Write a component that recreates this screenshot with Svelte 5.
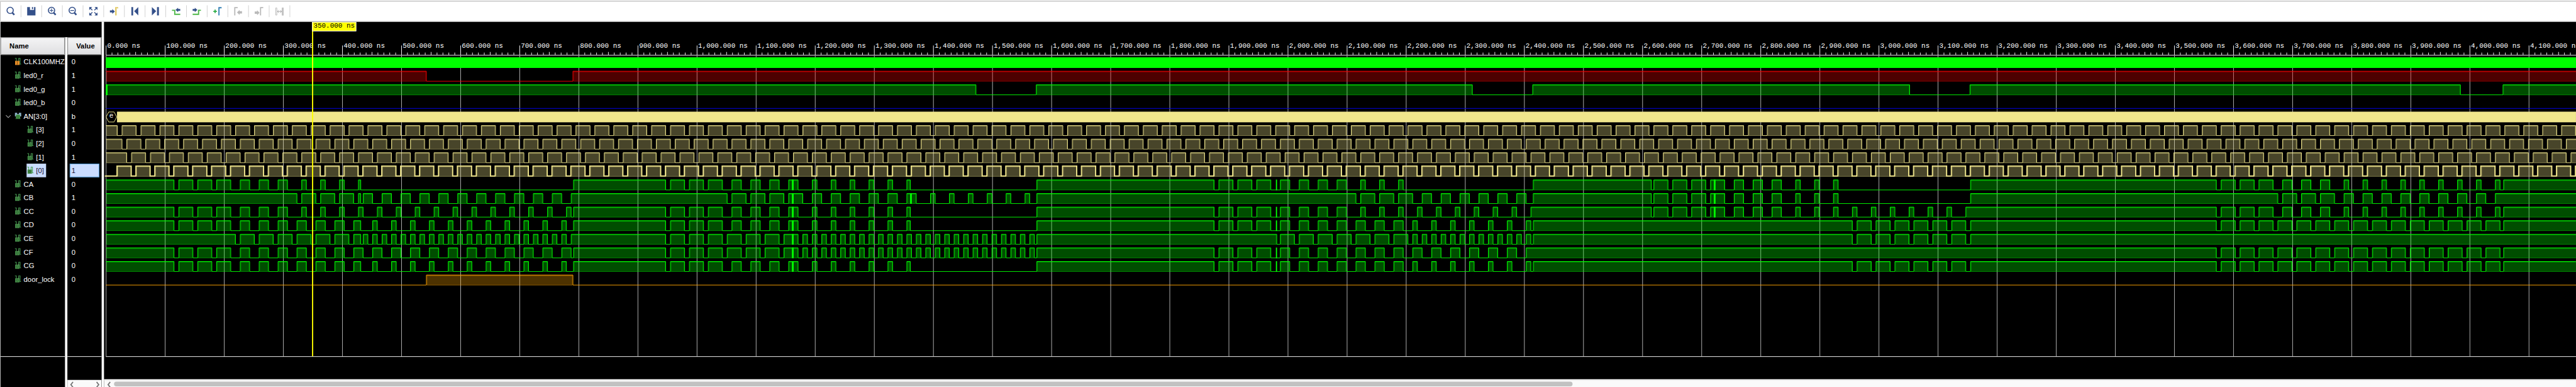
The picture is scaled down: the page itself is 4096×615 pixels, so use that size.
<script>
  const X0 = 179;
  const END = 4185;

  const rep = (start, width, period, count) =>
    Array.from({ length: count }, (_, i) => [start + i * period, start + i * period + width]);
  const anode = (firstFall) => [[0, firstFall], ...rep(firstFall + 8, 24, 32, 132)];

  const t1 = rep(123, 24, 32, 3);
  const t1b = rep(227, 16, 32, 3);
  const a2 = [...rep(955, 24, 32, 3), ...rep(1059, 16, 32, 3), [1155, 1171], ...rep(1195, 8, 32, 5), [1355, 1361]];
  const e2 = [...rep(955, 24, 32, 7), ...rep(1179, 8, 16, 25)];
  const r3 = rep(1883, 24, 32, 3);
  const a4 = [[2619, 2643], [2651, 2675], [2683, 2707], [2715, 2739], ...rep(2755, 16, 32, 3)];
  const d4 = rep(2963, 24, 32, 6);
  const a5 = [...rep(3579, 24, 32, 3), ...rep(3683, 16, 32, 3), ...rep(3787, 8, 32, 9), [4057, END]];
  const d5 = [...rep(3579, 24, 32, 15), [4057, END]];

  const GREEN = '#00ff00';
  const KHAKI = '#f0e68c';

  const signals = [
    { name: 'CLK100MHZ', value: '0', icon: 'clk', color: GREEN, solid: 0 },
    { name: 'led0_r', value: '1', color: '#ff0000', high: [[0, 542], [790, END]] },
    { name: 'led0_g', value: '1', color: GREEN, high: [[0, 1472], [1574, 2312], [2414, 3052], [3154, 3984], [4056, END]], spikes: [[0, 3]] },
    { name: 'led0_b', value: '0', color: '#0000f0', high: [] },
    { name: 'AN[3:0]', value: 'b', icon: 'bus', color: KHAKI, solid: 19 },
    { name: '[3]', value: '1', child: true, color: KHAKI, high: anode(19) },
    { name: '[2]', value: '0', child: true, color: KHAKI, high: anode(27) },
    { name: '[1]', value: '1', child: true, color: KHAKI, high: anode(35) },
    { name: '[0]', value: '1', child: true, selected: true, color: KHAKI, high: rep(19, 24, 32, 132) },
    { name: 'CA', value: '0', color: GREEN, spikes: [[1161, 3], [1980, 2], [2721, 3]],
      high: [[0, 115], ...t1, ...t1b, ...rep(331, 8, 32, 3), [427, 431], [791, 947], ...a2, [1575, 1875], ...r3, ...rep(1987, 16, 32, 4), ...rep(2123, 8, 32, 3), [2415, 2615], ...a4, ...rep(2859, 8, 32, 3), [3155, 3571], ...a5] },
    { name: 'CB', value: '1', color: GREEN, spikes: [[1161, 3], [1361, 3], [2721, 3]],
      high: [[0, 323], ...rep(331, 24, 32, 3), [427, 431], ...rep(435, 16, 32, 11), [787, 1051], ...rep(1059, 24, 32, 3), [1155, 1179], ...rep(1195, 16, 32, 5), [1355, 1371], ...rep(1395, 8, 32, 6), [1575, 2115], ...rep(2123, 24, 32, 3), ...rep(2227, 16, 32, 6), [2415, 2615], ...a4, ...rep(2859, 8, 32, 3), [3155, 3675], ...rep(3683, 24, 32, 3), ...rep(3787, 16, 32, 8), [4043, END]] },
    { name: 'CC', value: '0', color: GREEN, spikes: [[1161, 3], [1980, 2], [2721, 3]],
      high: [[0, 115], ...t1, ...t1b, ...rep(331, 8, 32, 15), [791, 947], ...a2, [1575, 1875], ...r3, ...rep(1987, 16, 32, 4), ...rep(2123, 8, 32, 9), [2411, 2615], ...a4, ...rep(2859, 8, 32, 9), [3147, 3571], ...a5] },
    { name: 'CD', value: '0', color: GREEN, spikes: [[1161, 3], [1980, 2]],
      high: [[0, 115], ...t1, ...t1b, ...rep(323, 16, 32, 3), [419, 431], ...rep(451, 8, 32, 11), [791, 947], ...a2, [1575, 1875], ...r3, ...rep(1987, 16, 32, 7), ...rep(2211, 8, 32, 7), [2415, 2955], ...d4, [3155, 3571], ...d5] },
    { name: 'CE', value: '0', color: GREEN, spikes: [[1161, 3]],
      high: [[0, 219], ...rep(227, 24, 32, 6), [419, 431], ...rep(435, 8, 16, 22), [787, 947], ...e2, [1575, 1981], ...rep(1987, 24, 32, 7), ...rep(2211, 8, 16, 13), [2415, 2955], ...d4, [3155, END]] },
    { name: 'CF', value: '0', color: GREEN, spikes: [[1161, 3], [1980, 2]],
      high: [[0, 115], ...t1, ...t1b, ...rep(323, 16, 32, 15), [791, 947], ...e2, [1575, 1875], ...r3, ...rep(1987, 16, 32, 13), [2403, 3571], ...d5] },
    { name: 'CG', value: '0', color: GREEN, spikes: [[1161, 3], [1980, 2]],
      high: [[0, 115], ...t1, ...t1b, ...rep(323, 16, 32, 3), [419, 431], ...rep(451, 8, 32, 11), [791, 947], ...a2, [1575, 1875], ...r3, ...rep(1987, 16, 32, 7), ...rep(2211, 8, 32, 7), [2415, 2955], ...d4, [3155, 3571], ...d5] },
    { name: 'door_lock', value: '0', color: '#ffa500', high: [[542, 790]] }
  ];

  // The trace of one signal: level line, translucent body and inner rim.
  function trace(sig, row) {
    const hi = 97 + 23 * row + 0.5;
    const lo = hi + 17;
    let line = '';
    let fill = '';
    let rim = '';
    let at = sig.selected ? -1 : 0;
    let first = true;
    for (const [a, b] of sig.high) {
      const xa = X0 + a + 0.5;
      const xb = X0 + b + 0.5;
      if (a > 0) {
        line += `${first ? 'M' : 'L'}${X0 + at + (first ? 0 : 0.5)} ${lo}L${xa} ${lo}L${xa} ${hi}`;
      } else {
        line += `M${X0} ${hi}`;
      }
      line += `L${xb} ${hi}L${xb} ${lo}`;
      fill += `M${xa + 0.5} ${hi}H${xb - 0.5}V${lo + 0.5}H${xa + 0.5}Z`;
      rim += `M${xa + 1} ${hi + 1}H${xb - 1}V${lo}H${xa + 1}Z`;
      at = b;
      first = false;
    }
    if (first) line = `M${X0} ${lo}`;
    line += `L${X0 + END} ${lo}`;
    return { line, fill, rim, hi, lo };
  }

  const rows = signals.map((s, i) => ({ ...s, row: i, t: s.high ? trace(s, i) : null }));

  const majors = Array.from({ length: 42 }, (_, i) => i * 100);
  const label = (n) => n.toLocaleString('en-US') + '.000 ns';
  let minorTicks = '';
  for (let t = 10; t < END; t += 10) {
    if (t % 100) minorTicks += `M${X0 + t + 0.5} ${t % 50 ? 89 : 88}V93`;
  }
  const majorTicks = majors.map((t) => `M${X0 + t + 0.5} 77V93`).join('');
  const grid = majors.map((t) => `M${X0 + t + 0.5} 94V603`).join('');

  const tools = ['find', 'save', 'zoomin', 'zoomout', 'fit', 'gocursor', 'first', 'last', 'prev', 'next', 'addmarker', 'prevmarker', 'nextmarker', 'swap'];
</script>

{#snippet lens()}
  <circle cx="16.2" cy="14.6" r="5.3" fill="none" stroke="#34508a" stroke-width="1.7" />
  <path d="M20 18.6L23.2 22.2" stroke="#34508a" stroke-width="2.8" />
{/snippet}

{#snippet signalIcon(kind)}
  <svg class="sig" width="11" height="13" viewBox="0 0 11 13">
    {#if kind === 'bus'}
      <path d="M0 1h4v2h3V1h4v6H9v-2H2v2H0z" fill="#8fb4cc" />
      <rect x="2" y="4" width="7" height="7" fill="#4c9a4c" />
      <path d="M1 11h9" stroke="#2d6b34" />
      <circle cx="5.5" cy="7.5" r="1.7" fill="none" stroke="#1f5c25" />
    {:else}
      <path d="M0 .8H2.6V6M6.6 6V.8H9V10.5H10.6" fill="none" stroke="#4aa055" stroke-width="1.1" />
      <rect x=".6" y="5" width="7.4" height="7" fill={kind === 'clk' ? '#f0932b' : '#458a48'} />
      {#if kind === 'clk'}
        <path d="M2.6 6.5H6M2.6 10.5H6M4.3 7v3" stroke="#8a5210" fill="none" />
      {:else}
        <circle cx="4.3" cy="8.4" r="1.7" fill="none" stroke="#2a642e" />
        <path d="M5.5 5.5L7 4" stroke="#76b877" />
      {/if}
    {/if}
  </svg>
{/snippet}

<div class="window">
  <div class="app">
    <div class="edge"></div>
    <div class="toolbar">
      {#each tools as tool}
        <div class="tool">
          <svg width="34" height="32" viewBox="0 0 34 32">
            {#if tool === 'find'}
              {@render lens()}
            {:else if tool === 'save'}
              <path d="M10 9h4.7v4.7h6.9V9H24v14H10zM18 9h2v3.4h-2z" fill="#34508a" />
            {:else if tool === 'zoomin'}
              {@render lens()}
              <path d="M13 14.6h6.4M16.2 11.4v6.4" stroke="#34508a" stroke-width="1.2" />
            {:else if tool === 'zoomout'}
              {@render lens()}
              <path d="M13 14.6h6.4" stroke="#34508a" stroke-width="1.3" />
            {:else if tool === 'fit'}
              <path d="M10 9h5l-5 5zM24 9h-5l5 5zM10 23h5l-5-5zM24 23h-5l5-5z" fill="#34508a" />
              <path d="M11 10l4.3 4.3M23 10l-4.3 4.3M11 22l4.3-4.3M23 22l-4.3-4.3" stroke="#34508a" stroke-width="1.5" />
            {:else if tool === 'gocursor'}
              <path d="M10 14.6h4V12.4l4.4 4-4.4 4v-2.4h-4z" fill="#34508a" />
              <path d="M18.8 9H24v2.4h-1.4V10.800H21.400V23H18.800z" fill="#e3cb6b" />
            {:else if tool === 'first'}
              <path d="M11.300 9h3v14h-3zM23 9v14l-7-7z" fill="#34508a" />
            {:else if tool === 'last'}
              <path d="M19.700 9h3.200v14h-3.200zM11 9v14l7.300-7z" fill="#34508a" />
            {:else if tool === 'prev'}
              <path d="M10 14.500H14.700V21.200H24" fill="none" stroke="#4db848" stroke-width="2" />
              <path d="M24 12.200h-3.600V10l-4.400 3.800 4.400 3.800v-2.200H24z" fill="#34508a" />
            {:else if tool === 'next'}
              <path d="M24 14.500H20V21.200H10" fill="none" stroke="#4db848" stroke-width="2" />
              <path d="M10 12.200h3.600V10l4.400 3.800-4.400 3.800v-2.200H10z" fill="#34508a" />
            {:else if tool === 'addmarker'}
              <path d="M10 16.200h6M13 13.200v6" stroke="#2fae49" stroke-width="1.900" />
              <path d="M19.500 23V10H24" fill="none" stroke="#3580b4" stroke-width="2" />
            {:else if tool === 'prevmarker'}
              <path d="M11.300 23V10H16.200" fill="none" stroke="#b9b9b9" stroke-width="1.900" />
              <path d="M23.500 16h-4v-2.200l-4.500 4.200 4.500 4.200v-2.200h4z" fill="#b9b9b9" />
            {:else if tool === 'nextmarker'}
              <path d="M19.900 23V10H24.400" fill="none" stroke="#b9b9b9" stroke-width="1.900" />
              <path d="M10 16.500h4v-2.200l4.200 4.200-4.200 4.200v-2.200h-4z" fill="#b9b9b9" />
            {:else}
              <path d="M10.500 10.500h2v12h-2zM21.500 10.500h2v12h-2z" fill="none" stroke="#b9b9b9" />
              <path d="M21 10h3v13h-3z" fill="#c4c4c4" />
              <path d="M13.500 16.500h7M15.800 14.200l-2.300 2.300 2.300 2.300M18.200 14.200l2.300 2.300-2.300 2.300" fill="none" stroke="#a4a4a4" />
            {/if}
          </svg>
        </div>
      {/each}
    </div>

    <div class="body">
      <div class="tables">
        <div class="blank"></div>
        <div class="columns">
          <div class="col names">
            <div class="head name-head">Name</div>
            <div class="list">
              {#each rows as s}
                <div class="item" class:child={s.child}>
                  {#if s.icon === 'bus'}
                    <svg class="twist" width="10" height="6" viewBox="0 0 10 6"><path d="M1 1L5 5L9 1" fill="none" stroke="#9a9a9a" stroke-width="1.200" /></svg>
                  {/if}
                  <div class="tag" class:selected={s.selected}>
                    {@render signalIcon(s.icon)}
                    <span>{s.name}</span>
                  </div>
                </div>
              {/each}
            </div>
            <div class="foot"></div>
          </div>
          <div class="col values">
            <div class="head value-head">Value</div>
            <div class="list">
              {#each rows as s}
                <div class="item">
                  <div class="val" class:selected={s.selected}>{s.value}</div>
                </div>
              {/each}
            </div>
            <div class="foot short"></div>
            <div class="vscroll">
              <svg width="58" height="12" viewBox="0 0 58 12">
                <path d="M9.500 3.500L6 8L9.500 12.500M49.500 3.500L53 8L49.500 12.500" fill="none" stroke="#767676" stroke-width="2" />
              </svg>
            </div>
          </div>
        </div>
      </div>

      <div class="waves">
        <svg class="plot" width="4183" height="605" viewBox="176 37 4183 605">
          <path d={grid} stroke="#b8b8b8" />
          <path d={minorTicks} stroke="#fff" />
          <path d={majorTicks} stroke="#fff" />
          <path d="M179 93.500H4359M179 603.500H4359" stroke="#fff" />
          {#each majors as t}
            <text class="mono" x={X0 + t + 2.400} y="80.500" fill="#fff">{label(t)}</text>
          {/each}
          {#each rows as s}
            {#if s.t}
              <path d={s.t.fill} fill={s.color} fill-opacity=".3" />
              <path d={s.t.rim} fill="none" stroke={s.color} stroke-opacity=".32" />
              {#if s.selected}
                <path d={s.t.line} transform="translate(-.5 -.5)" fill="none" stroke={s.color} stroke-width="2" />
              {:else}
                <path d={s.t.line} fill="none" stroke={s.color} />
                {#if s.high.length}
                  {#each s.high as [a, b]}
                    <path d="M{X0 + a + 1} {s.t.hi + 1}H{X0 + b}" stroke={s.color} stroke-opacity=".2" />
                  {/each}
                {/if}
              {/if}
              {#each s.spikes ?? [] as [t, w]}
                <rect x={X0 + t} y={s.t.hi - 0.5} width={w} height="18" fill={s.color} />
              {/each}
            {:else}
              <rect x={X0 + s.solid} y={97 + 23 * s.row} width={END} height="18" fill={s.color} />
              {#if s.solid}
                <path d="M179.500 198L184 189.500H193L197.500 198L193 206.500H184Z" fill="#000" stroke={s.color} />
                <text class="mono" x="184.800" y="199.500" fill="#fff">e</text>
              {/if}
            {/if}
          {/each}
          <rect x="528" y="37" width="2" height="566" fill="#ffff00" />
          <rect x="528.500" y="37.500" width="74" height="15" fill="#ffff00" stroke="#fff" />
          <text class="mono" x="530.400" y="46.500" fill="#000">350.000 ns</text>
        </svg>
        <div class="hscroll">
          <svg width="17" height="12" viewBox="0 0 17 12">
            <path d="M10.500 3.500L7 8L10.500 12.500" fill="none" stroke="#767676" stroke-width="2" />
          </svg>
          <div class="thumb"></div>
        </div>
      </div>
    </div>
  </div>
</div>

<style>
  :global(body) {
    margin: 0;
    background: #000;
  }
  .window {
    width: 4096px;
    height: 615px;
    overflow: hidden;
  }
  .app {
    width: 4359px;
    height: 655px;
    display: flex;
    flex-direction: column;
    box-sizing: border-box;
    transform: scale(0.93966, 0.93893);
    transform-origin: 0 0;
    background: #fff;
    font-family: "Liberation Sans", Arial, sans-serif;
    font-size: 12px;
    overflow: hidden;
  }
  .edge {
    flex: none;
    height: 2px;
    background: #e9e9e9;
    border-bottom: 1px solid #bababa;
  }
  .toolbar {
    flex: none;
    height: 32px;
    display: flex;
    align-items: center;
    border-left: 1px solid #bababa;
    border-bottom: 2px solid #e6e6e6;
    background: #fff;
  }
  .tool {
    width: 34px;
    height: 20px;
    display: flex;
    align-items: center;
    border-right: 1px solid #cfcfcf;
  }
  .tool svg {
    flex: none;
    display: block;
  }
  .body {
    flex: 1;
    min-height: 0;
    display: flex;
    gap: 4px;
  }
  .tables {
    flex: none;
    width: 171px;
    border-left: 1px solid #bababa;
    display: flex;
    flex-direction: column;
  }
  .blank {
    flex: none;
    height: 26px;
    background: #000;
  }
  .columns {
    flex: 1;
    display: flex;
    gap: 4px;
    min-height: 0;
  }
  .col {
    display: flex;
    flex-direction: column;
    overflow: hidden;
    background: #000;
    color: #fff;
  }
  .names {
    width: 109px;
  }
  .values {
    width: 58px;
  }
  .head {
    flex: none;
    height: 30px;
    box-sizing: border-box;
    border: 1px solid #b9b9b9;
    background: linear-gradient(#f4f4f5, #dfdfe1);
    color: #000;
    font-weight: bold;
    line-height: 29px;
  }
  .name-head {
    padding-left: 14px;
  }
  .value-head {
    padding-left: 14px;
  }
  .list {
    height: 510px;
    flex: none;
    border-bottom: 1px solid #fff;
  }
  .foot {
    flex: 1;
  }
  .foot.short {
    flex: none;
    height: 39px;
  }
  .item {
    height: 23px;
    display: flex;
    align-items: center;
    padding-left: 23px;
    position: relative;
    white-space: nowrap;
  }
  .item.child {
    padding-left: 44px;
  }
  .twist {
    position: absolute;
    left: 8px;
    top: 9px;
  }
  .tag {
    display: flex;
    align-items: center;
    height: 23px;
    gap: 4px;
    padding: 0 4px 0 1px;
  }
  .tag span {
    line-height: 23px;
    margin-top: 1px;
  }
  .sig {
    flex: none;
    margin-top: -1px;
  }
  .tag.selected {
    background: #cadcff;
    color: #1a1030;
  }
  .values .item {
    padding-left: 4px;
  }
  .val {
    width: 50px;
    height: 23px;
    box-sizing: border-box;
    border: 1px solid transparent;
    padding-left: 2px;
    line-height: 22px;
  }
  .val.selected {
    background: #cadcff;
    border-color: #4a9ad8;
    color: #1a1030;
  }
  .vscroll {
    flex: 1;
    background: #fafafa;
    overflow: hidden;
  }
  .vscroll svg,
  .plot {
    display: block;
  }
  .waves {
    flex: 1;
    min-width: 0;
    display: flex;
    flex-direction: column;
    background: #000;
  }
  .plot {
    flex: none;
  }
  .mono {
    font-family: "Liberation Mono", monospace;
    font-size: 11.667px;
    white-space: pre;
  }
  .hscroll {
    flex: 1;
    display: flex;
    align-items: flex-start;
    background: #fafafa;
    border-top: 1px solid #fff;
    box-shadow: inset 0 1px #e4e4e4;
    overflow: hidden;
  }
  .hscroll svg {
    flex: none;
  }
  .thumb {
    width: 2468px;
    height: 8px;
    margin-top: 3px;
    border-radius: 4px;
    background: #c1c1c1;
  }
</style>
